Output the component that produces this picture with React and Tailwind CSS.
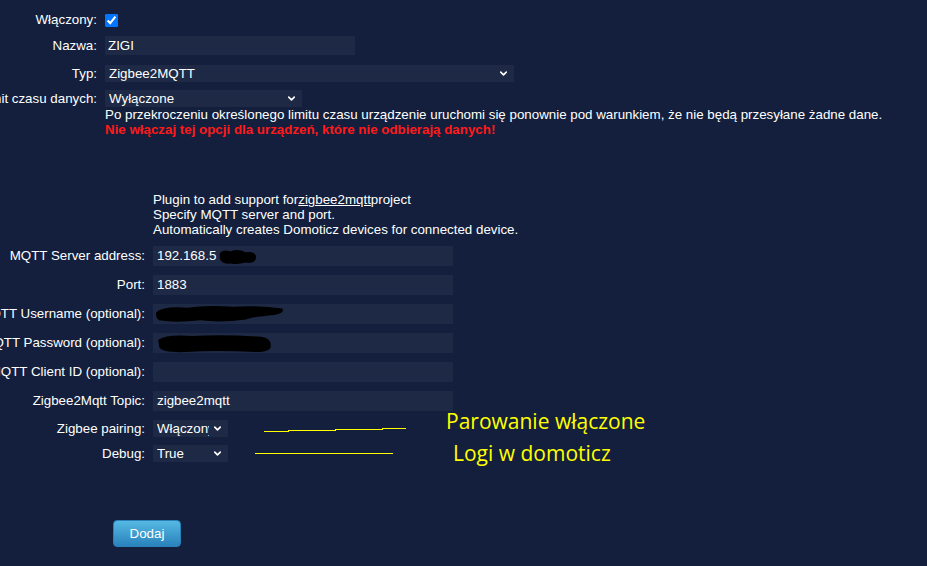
import { ChevronDown } from 'lucide-react';

const font = { fontFamily: '"Liberation Sans", Arial, sans-serif' };
const note = { fontFamily: '"Open Sans", sans-serif' };

function Label({ w, children }) {
  return (
    <div className={`${w} shrink-0 flex justify-end whitespace-nowrap`}>
      {children}
    </div>
  );
}

function Field({ w, h = 'h-[20px]', children }) {
  return (
    <div className={`${w} ${h} relative flex items-center bg-[#1e2a45] pl-[4px] overflow-hidden`}>
      {children}
    </div>
  );
}

function Select({ w, value }) {
  return (
    <div className={`${w} h-[17px] relative flex items-center bg-[#1e2a45] pl-[4px] pr-[5px]`}>
      <span className="flex-1 mr-[3px] overflow-hidden whitespace-nowrap">{value}</span>
      <ChevronDown size={11} strokeWidth={3.5} className="shrink-0 text-white" />
    </div>
  );
}

function Scribble({ className, d }) {
  return (
    <svg className={`absolute ${className}`} viewBox="0 0 100 20" preserveAspectRatio="none">
      <path d={d} fill="#000" />
    </svg>
  );
}

export default function App() {
  const row2 = 'flex items-center gap-[8px] mt-[9px]';

  return (
    <div className="w-[927px] h-[566px] bg-[#131f3d] text-white text-[13.33px] overflow-hidden" style={font}>
      {/* device section */}
      <div className="pt-[10px]">
        <div className="flex items-center gap-[8px] h-[20px]">
          <Label w="w-[97px]">Włączony:</Label>
          <input type="checkbox" checked readOnly className="w-[13px] h-[13px] accent-[#0075ff] m-0" />
        </div>
        <div className="flex items-center gap-[8px] h-[19px] mt-[6px]">
          <Label w="w-[97px]">Nazwa:</Label>
          <Field w="w-[250px]" h="h-[19px]"><span className="-ml-[1px]">ZIGI</span></Field>
        </div>
        <div className="flex items-center gap-[8px] h-[17px] mt-[10px]">
          <Label w="w-[97px]">Typ:</Label>
          <Select w="w-[409px]" value="Zigbee2MQTT" />
        </div>
        <div className="flex items-center gap-[8px] h-[17px] mt-[8px]">
          <Label w="w-[97px]">Limit czasu danych:</Label>
          <Select w="w-[197px]" value="Wyłączone" />
        </div>
        <div className="pl-[105px] leading-[15px]">
          <div>Po przekroczeniu określonego limitu czasu urządzenie uruchomi się ponownie pod warunkiem, że nie będą przesyłane żadne dane.</div>
          <div className="font-bold text-[#ff1a1a]">Nie włączaj tej opcji dla urządzeń, które nie odbierają danych!</div>
        </div>
      </div>

      {/* plugin section */}
      <div className="mt-[55px]">
        <div className="pl-[153px] leading-[15px]">
          <div>Plugin to add support for<span className="underline">zigbee2mqtt</span>project</div>
          <div>Specify MQTT server and port.</div>
          <div>Automatically creates Domoticz devices for connected device.</div>
        </div>

        <div className={row2}>
          <Label w="w-[145px]">MQTT Server address:</Label>
          <Field w="w-[300px]">
            192.168.5
            <Scribble className="left-[66px] top-[3px] w-[38px] h-[16px]" d="M2 6 Q10 0 30 3 Q50 -1 70 4 Q95 2 98 10 Q96 19 70 17 Q50 20 30 18 Q8 20 2 12 Z" />
          </Field>
        </div>
        <div className={row2}>
          <Label w="w-[145px]">Port:</Label>
          <Field w="w-[300px]">1883</Field>
        </div>
        <div className={row2}>
          <Label w="w-[145px]">MQTT Username (optional):</Label>
          <Field w="w-[300px]">
            <Scribble className="left-[2px] top-[1px] w-[130px] h-[18px]" d="M1 8 Q6 1 25 3 Q40 0 60 2 Q80 0 98 4 Q100 9 92 11 Q75 13 70 16 Q50 20 35 17 Q15 20 3 17 Q0 13 1 8 Z" />
          </Field>
        </div>
        <div className={row2}>
          <Label w="w-[145px]">MQTT Password (optional):</Label>
          <Field w="w-[300px]">
            <Scribble className="left-[4px] top-[1px] w-[116px] h-[19px]" d="M1 6 Q8 0 30 2 Q60 0 90 3 Q99 5 98 12 Q99 19 85 19 Q50 17 25 19 Q5 20 2 14 Z" />
          </Field>
        </div>
        <div className={row2}>
          <Label w="w-[145px]">MQTT Client ID (optional):</Label>
          <Field w="w-[300px]" />
        </div>
        <div className={row2}>
          <Label w="w-[145px]">Zigbee2Mqtt Topic:</Label>
          <Field w="w-[300px]">zigbee2mqtt</Field>
        </div>

        <div className="flex items-center h-[17px] mt-[9px]">
          <Label w="w-[145px]">Zigbee pairing:</Label>
          <div className="ml-[8px]"><Select w="w-[75px]" value="Włączony" /></div>
          <svg className="ml-[36px] w-[142px] h-[6px]" viewBox="0 0 142 6" shapeRendering="crispEdges">
            <polyline points="0,5.5 24,5.5 24,4.5 71,4.5 71,3.5 118,3.5 118,2.5 142,2.5" fill="none" stroke="#ffff00" strokeWidth="1" />
          </svg>
          <span className="ml-[40px] -mt-[14px] text-[21px] text-[#ffff00] whitespace-nowrap" style={note}>
            Parowanie włączone
          </span>
        </div>
        <div className="flex items-center h-[17px] mt-[8px]">
          <Label w="w-[145px]">Debug:</Label>
          <div className="ml-[8px]"><Select w="w-[75px]" value="True" /></div>
          <svg className="ml-[27px] w-[138px] h-[4px]" viewBox="0 0 138 4" shapeRendering="crispEdges">
            <line x1="0" y1="1.5" x2="138" y2="1.5" stroke="#ffff00" strokeWidth="1" />
          </svg>
          <span className="ml-[60px] text-[21px] text-[#ffff00] whitespace-nowrap" style={note}>
            Logi w domoticz
          </span>
        </div>

        <div className="pl-[113px] mt-[58px]">
          <button className="w-[68px] h-[27px] rounded-[4px] border border-[#2a80b8] bg-gradient-to-b from-[#55b9e2] to-[#2a82bc] text-white text-[13.33px]">
            Dodaj
          </button>
        </div>
      </div>
    </div>
  );
}
